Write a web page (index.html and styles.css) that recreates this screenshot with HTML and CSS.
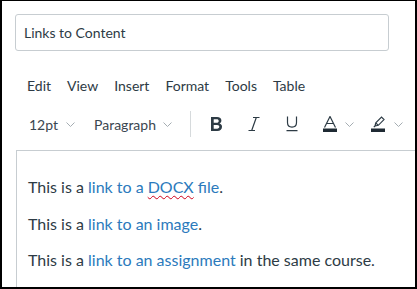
FILE: index.html
```html
<!DOCTYPE html>
<html lang="en">

<head>
    <meta charset="UTF-8">
    <meta name="viewport" content="width=device-width, initial-scale=1.0">
    <title>Links to Content</title>
    <link rel="stylesheet" href="styles.css">
</head>

<body>
    <div class="frame">
        <div class="title-field">Links to Content</div>

        <div class="menubar">
            <span>Edit</span>
            <span>View</span>
            <span>Insert</span>
            <span>Format</span>
            <span>Tools</span>
            <span>Table</span>
        </div>

        <div class="toolbar">
            <div class="select select-size">12pt <svg class="chev" viewBox="0 0 9 5"><path d="M.5 .5l4 4 4-4"/></svg></div>
            <div class="select select-block">Paragraph <svg class="chev" viewBox="0 0 9 5"><path d="M.5 .5l4 4 4-4"/></svg></div>
            <div class="sep"></div>

            <svg class="tool tool-b" viewBox="0 0 13 16">
                <path fill-rule="evenodd" d="M1 1h6c2.8 0 4.4 1.3 4.4 3.6 0 1.4-.7 2.4-1.9 2.9 1.6.4 2.5 1.6 2.5 3.3 0 2.6-1.7 4.2-4.7 4.2H1z M3.7 3.3v3.5h3c1.3 0 2-.6 2-1.75s-.7-1.75-2-1.75z M3.7 9v3.7h3.4c1.4 0 2.2-.7 2.2-1.85S8.5 9 7.1 9z"/>
            </svg>
            <svg class="tool tool-i" viewBox="0 0 12 16">
                <path d="M5 1.5h6.5 M.5 14.5h6.5 M8.3 1.5L3.7 14.5"/>
            </svg>
            <svg class="tool tool-u" viewBox="0 0 12 16">
                <path d="M1.5 .5v6c0 3 1.6 4.6 4.5 4.6s4.5-1.6 4.5-4.6v-6 M.5 14.6h11"/>
            </svg>

            <div class="split split-a">
                <svg class="tool tool-a" viewBox="0 0 14 16">
                    <path class="stroke" d="M1.5 11.5L7 .5l5.5 11 M3.6 7.5h6.8"/>
                    <rect x="0" y="12.5" width="14" height="3.5"/>
                </svg>
                <svg class="chev" viewBox="0 0 9 5"><path d="M.5 .5l4 4 4-4"/></svg>
            </div>

            <div class="split split-hl">
                <svg class="tool tool-hl" viewBox="0 0 15 16">
                    <path class="stroke" d="M4 10l.8-3.2 5.7-5.7 2.5 2.5-5.7 5.7z M4.8 6.8l2.5 2.5 M4 10l-1.2 1.2"/>
                    <rect x="0" y="12.5" width="14" height="3.5"/>
                </svg>
                <svg class="chev" viewBox="0 0 9 5"><path d="M.5 .5l4 4 4-4"/></svg>
            </div>
        </div>

        <div class="editor">
            <p>This is a <a href="#">link to a <span class="misspelled">DOCX</span> file</a>.</p>
            <p>This is a <a href="#">link to an image</a>.</p>
            <p>This is a <a href="#">link to an assignment</a> in the same course.</p>
        </div>
    </div>
</body>

</html>
```

FILE: styles.css
```css
* {
    margin: 0;
    padding: 0;
    box-sizing: border-box;
}

body {
    font-family: Lato, 'Open Sans', sans-serif;
    background: #fff;
    color: #2d3b45;
}

.frame {
    width: 417px;
    height: 289px;
    border: 2px solid #000;
    border-top-width: 1px;
    overflow: hidden;
    padding: 13px 0 0 13px;
}

.title-field {
    width: 374px;
    height: 37px;
    border: 1px solid #c7cdd1;
    border-radius: 3px;
    padding: 0 8px;
    display: flex;
    align-items: center;
    font-size: 14px;
    color: #2d3b45;
}

/* Menu */
.menubar {
    display: flex;
    gap: 16px;
    margin-top: 25px;
    padding-left: 12px;
    font-size: 14px;
    line-height: 20px;
    color: #2d3b45;
}

/* Toolbar */
.toolbar {
    display: flex;
    align-items: center;
    height: 30px;
    margin-top: 13px;
    padding-left: 14px;
    font-size: 14px;
    color: #3a4650;
}

.select {
    display: flex;
    align-items: center;
    gap: 8px;
}

.select-block {
    margin-left: 19px;
}

.select-block .chev {
    margin-left: -1px;
}

.chev {
    width: 9px;
    height: 5px;
    flex: none;
    fill: none;
    stroke: #a5adb2;
    stroke-width: 1;
}

.sep {
    width: 1px;
    height: 26px;
    background: #d6dadc;
    margin: 0 19px 0 18px;
}

.tool {
    height: 16px;
    flex: none;
}

.tool-b {
    width: 13px;
    fill: #2d3b45;
}

.tool-i,
.tool-u {
    width: 12px;
    fill: none;
    stroke: #2d3b45;
    stroke-width: 1.2;
}

.tool-i {
    margin-left: 25px;
}

.tool-u {
    margin-left: 26px;
}

.split {
    display: flex;
    align-items: center;
    gap: 8px;
}

.split-a {
    margin-left: 25px;
}

.split-hl {
    margin-left: 17px;
}

.tool-a {
    width: 14px;
}

.tool-hl {
    width: 15px;
}

.tool-a .stroke,
.tool-hl .stroke {
    fill: none;
    stroke: #2d3b45;
    stroke-width: 1.2;
}

.tool-a rect,
.tool-hl rect {
    fill: #1f2a33;
}

/* Editor */
.editor {
    margin-top: 11px;
    margin-left: 1px;
    height: 200px;
    border-top: 1px solid #c7cdd1;
    border-left: 1px solid #c7cdd1;
    padding: 26px 0 0 11px;
    font-size: 16px;
    color: #2d3b45;
}

.editor p {
    line-height: 20px;
    margin-bottom: 16.5px;
    white-space: nowrap;
}

.editor a {
    color: #2b7abc;
    text-decoration: none;
}

.misspelled {
    text-decoration: underline wavy #d0021b;
    text-decoration-thickness: 1px;
    text-underline-offset: 2px;
}
```
